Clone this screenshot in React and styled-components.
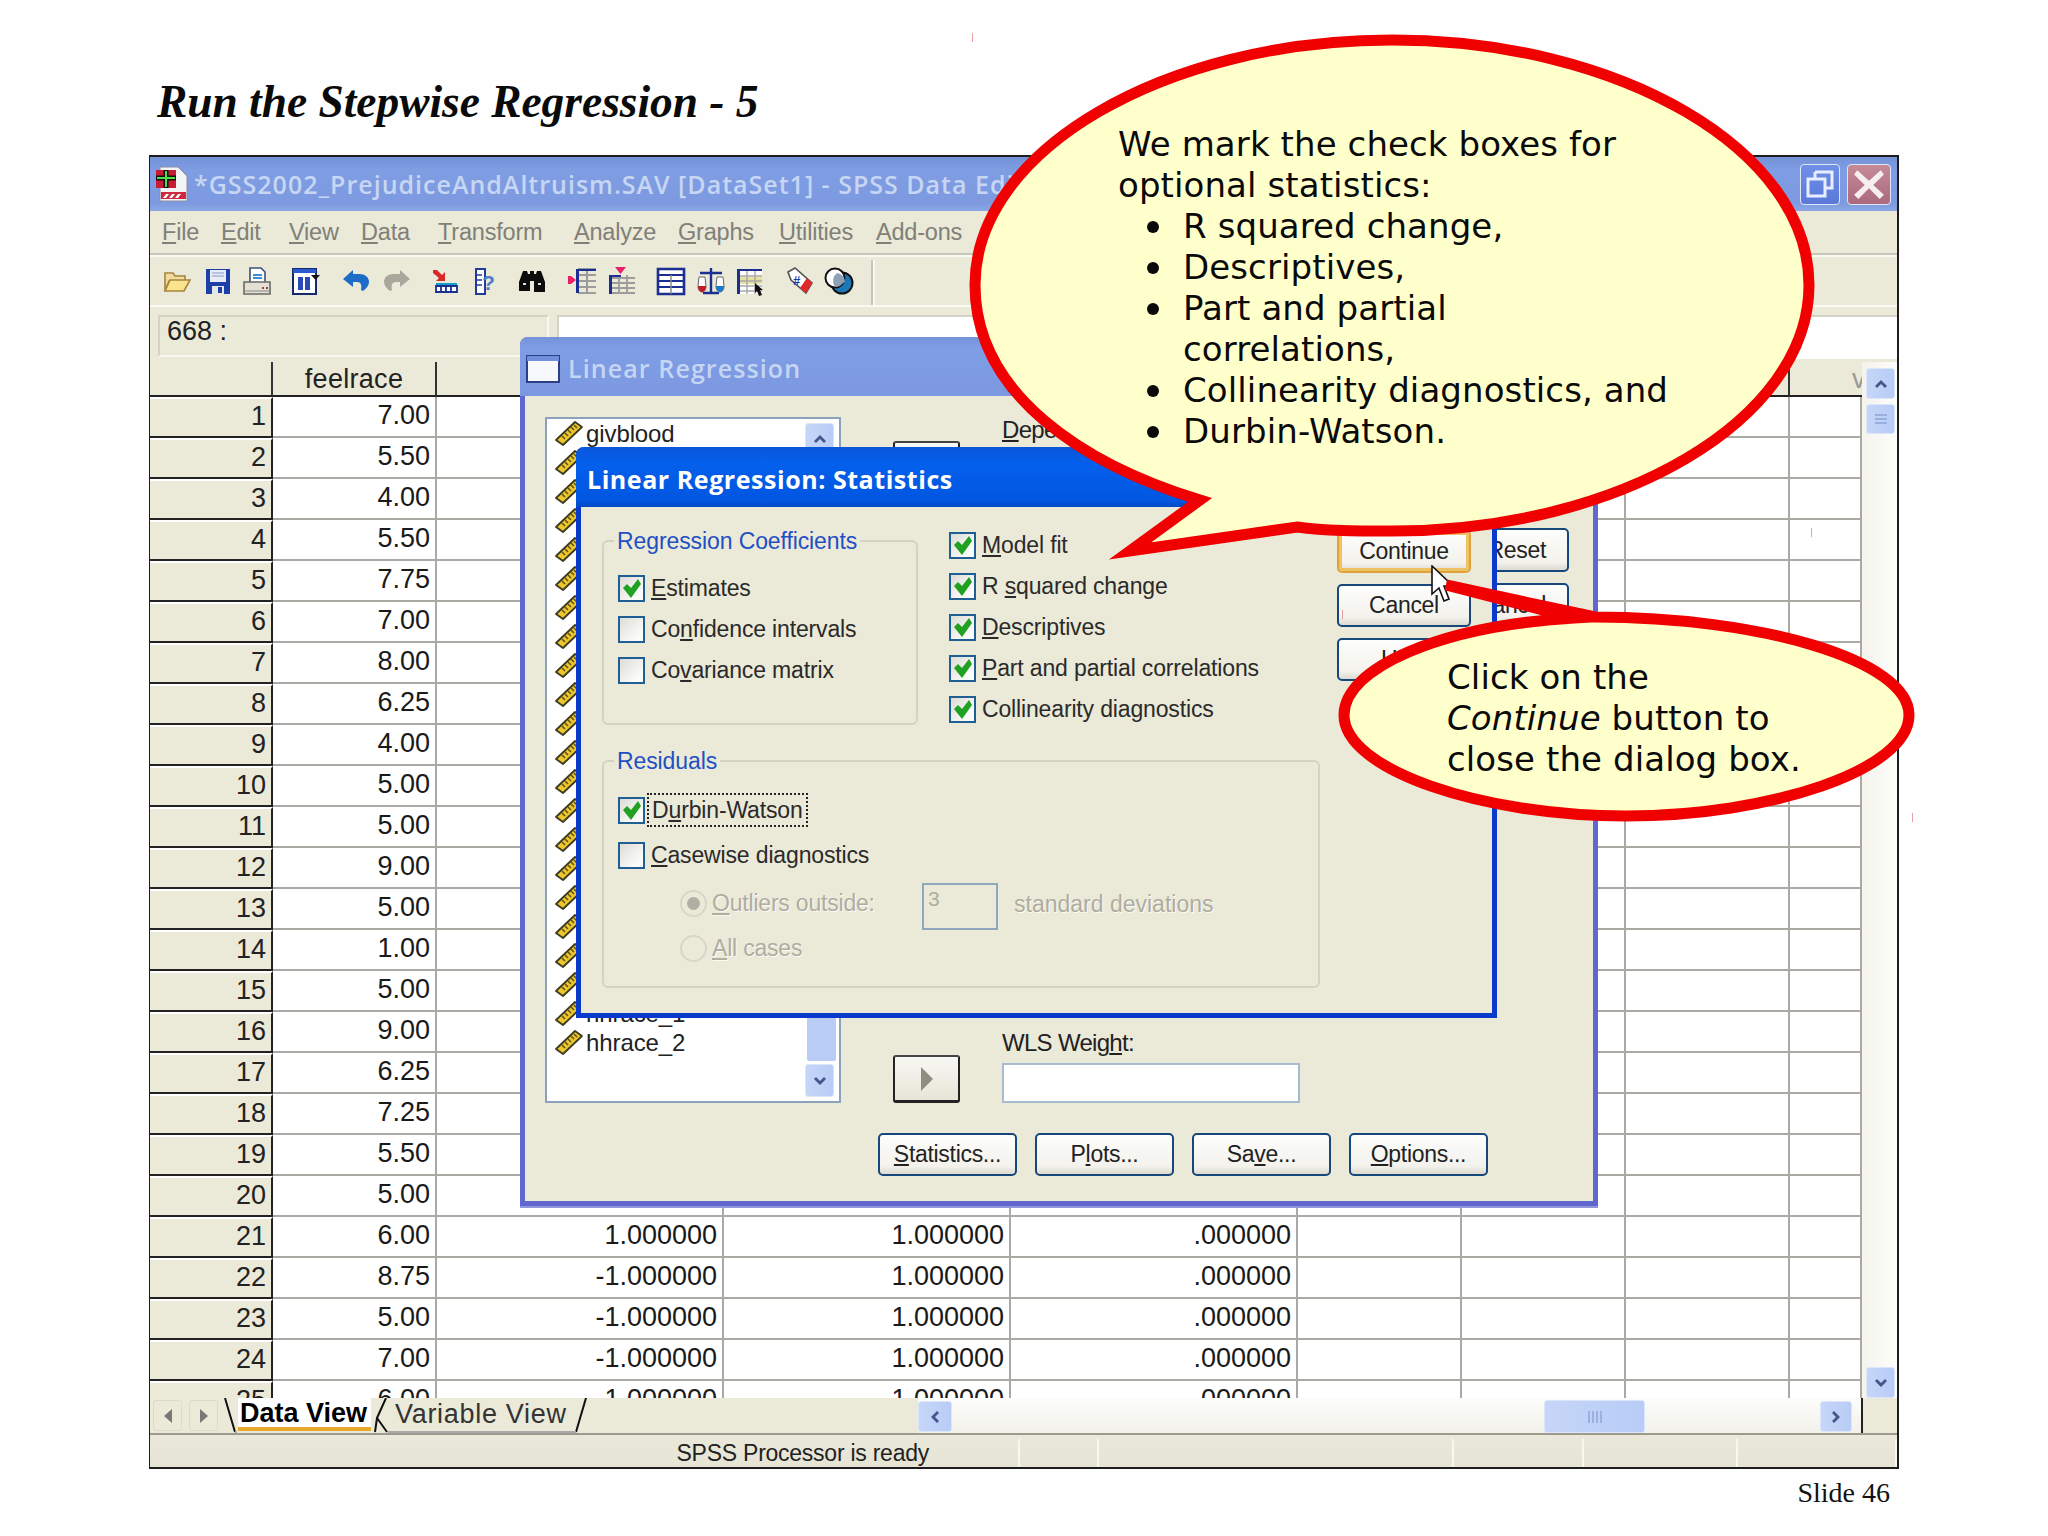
import React from "react";
import styled, { createGlobalStyle } from "styled-components";

const SANS = `"Liberation Sans", Arial, sans-serif`;

const GlobalStyle = createGlobalStyle`
  html, body {
    margin: 0;
    padding: 0;
    background: #fefefe;
  }
  body {
    font-family: ${SANS};
    color: #111;
  }
`;

const Page = styled.div`
  position: relative;
  width: 2048px;
  height: 1536px;
  overflow: hidden;
  padding: 72px 0 0 149px;
  box-sizing: border-box;
  background: #fefefe;
`;

const SlideTitle = styled.h1`
  margin: 0 0 0 8px;
  height: 83px;
  font: italic bold 45.4px/60px "Liberation Serif", "Times New Roman", serif;
  color: #0a0a0a;
`;

const Window = styled.div`
  position: relative;
  width: 1750px;
  height: 1314px;
  box-sizing: border-box;
  border: 2px solid #1d1d1d;
  border-left-width: 1px;
  background: #ebe9d8;
  display: flex;
  flex-direction: column;
  overflow: hidden;
`;

const TitleBar = styled.div`
  height: 54px;
  flex: none;
  display: flex;
  align-items: center;
  padding: 0 6px 0 4px;
  background: linear-gradient(#7492d8, #7f9de3 25%, #7d9ae0 85%, #8aa6e4);
`;

const WindowTitle = styled.span`
  flex: 1;
  margin-left: 4px;
  font: 600 25px "Open Sans", sans-serif;
  letter-spacing: 1px;
  color: #c6d6f3;
  white-space: nowrap;
  overflow: hidden;
`;

const CtrlButton = styled.div`
  width: ${(p) => p.$w}px;
  height: 41px;
  margin-left: 7px;
  border-radius: 4px;
  border: 1px solid #dfe6f6;
  box-sizing: border-box;
  background: ${(p) => p.$bg};
  display: flex;
  align-items: center;
  justify-content: center;
`;

const MenuBar = styled.div`
  height: 44px;
  flex: none;
  display: flex;
  align-items: center;
  padding-left: 12px;
  box-sizing: border-box;
  border-bottom: 2px solid #c8c6b8;
  font-size: 23.5px;
  letter-spacing: -0.2px;
  color: #808078;
`;

const MenuItem = styled.span`
  width: ${(p) => p.$w}px;
  flex: none;
`;

const Toolbar = styled.div`
  height: 50px;
  flex: none;
  position: relative;
  border-top: 2px solid #fafaf4;
  box-sizing: border-box;
  display: flex;
  align-items: center;
  padding-left: 12px;
`;

const ToolIcon = styled.svg`
  width: 30px;
  height: 30px;
  flex: none;
  margin-left: ${(p) => p.$gap}px;
`;

const ToolSeparator = styled.div`
  position: absolute;
  left: 721px;
  top: 3px;
  bottom: 0;
  width: 2px;
  background: #c8c6b8;
  box-shadow: 2px 0 0 #f8f8f0;
`;

const CellBar = styled.div`
  height: 57px;
  flex: none;
  display: flex;
  gap: 8px;
  padding: 8px 0 0 8px;
  box-sizing: border-box;
  border-top: 2px solid #fafaf4;
`;

const CellName = styled.div`
  width: 391px;
  height: 42px;
  box-sizing: border-box;
  border: 2px solid #d4d2c4;
  border-bottom-color: #f8f8f0;
  border-right-color: #f8f8f0;
  padding-left: 7px;
  font-size: 27px;
  line-height: 28px;
  color: #222;
`;

const CellValue = styled.div`
  flex: 1;
  height: 42px;
  background: #fff;
  border-top: 2px solid #d4d2c4;
  border-left: 2px solid #d4d2c4;
`;

const SheetArea = styled.div`
  flex: none;
  height: 1036px;
  display: flex;
  overflow: hidden;
`;

const Grid = styled.div`
  width: 1712px;
  flex: none;
  overflow: hidden;
  background: #fff;
`;

const GridRow = styled.div`
  display: grid;
  grid-template-columns: 123px 164px 287px 287px 287px 164px 164px 164px 72px;
  height: ${(p) => p.$h}px;
`;

const HeadCell = styled.div`
  box-sizing: border-box;
  background: #ebe9d8;
  border-right: 2px solid #333;
  border-bottom: 2px solid #222;
  font-size: 27px;
  line-height: 35px;
  letter-spacing: 0.3px;
  text-align: center;
  overflow: hidden;
  white-space: nowrap;
  color: #222;
  ${(p) => p.$last && `border-right: none; text-align: left; padding-left: 62px; color: #999;`}
`;

const RowLabel = styled.div`
  box-sizing: border-box;
  background: #ebe9d8;
  border-top: 2px solid #fff;
  border-right: 2px solid #222;
  border-bottom: 2px solid #222;
  font-size: 27px;
  line-height: 34px;
  text-align: right;
  padding-right: 5px;
  color: #222;
`;

const DataCell = styled.div`
  box-sizing: border-box;
  border-right: 2px solid #aaa9a4;
  border-bottom: 2px solid #aaa9a4;
  font-size: 27px;
  line-height: 36px;
  text-align: right;
  padding-right: 5px;
  color: #1a1a1a;
`;

const VScroll = styled.div`
  flex: 1;
  position: relative;
  background: linear-gradient(90deg, #f4f3ec, #fdfdfb);
`;

const ScrollBtn = styled.div`
  position: absolute;
  left: ${(p) => p.$left ?? 4}px;
  top: ${(p) => p.$top ?? "auto"};
  bottom: ${(p) => p.$bottom ?? "auto"};
  width: ${(p) => p.$w ?? 29}px;
  height: ${(p) => p.$h ?? 31}px;
  box-sizing: border-box;
  border-radius: 3px;
  border: 1px solid #dbe6fb;
  background: linear-gradient(90deg, #c6d6f8, #b8ccf6);
  display: flex;
  align-items: center;
  justify-content: center;
`;

const BottomBar = styled.div`
  flex: none;
  height: 35px;
  display: flex;
  border-bottom: 2px solid #9c9a8c;
  box-sizing: content-box;
`;

const TabStrip = styled.div`
  width: 765px;
  flex: none;
  position: relative;
  display: flex;
  align-items: center;
  padding-left: 3px;
  gap: 7px;
  background: #ebe9d8;
`;

const NavButton = styled.div`
  width: 29px;
  height: 31px;
  border: 1px solid #dcdacb;
  border-radius: 3px;
  box-sizing: border-box;
  display: flex;
  align-items: center;
  justify-content: center;
`;

const Tab = styled.span`
  position: absolute;
  top: 0;
  left: ${(p) => p.$left}px;
  height: 33px;
  font-size: 27px;
  font-weight: ${(p) => (p.$active ? 700 : 400)};
  line-height: 33px;
  letter-spacing: ${(p) => (p.$active ? "0" : "0.7px")};
  color: ${(p) => (p.$active ? "#000" : "#333")};
  white-space: nowrap;
  ${(p) => p.$active && `
    background: #fff;
    border-bottom: 4px solid #e8a829;
    box-sizing: border-box;
    padding: 0 4px 0 2px;
    line-height: 31px;
  `}
`;

const TabLines = styled.svg`
  position: absolute;
  left: 0;
  top: 0;
  width: 765px;
  height: 35px;
  pointer-events: none;
`;

const HScroll = styled.div`
  flex: 1;
  position: relative;
  background: linear-gradient(#fcfcfa, #f2f1ea);
`;

const Corner = styled.div`
  width: 36px;
  flex: none;
  background: #ebe9d8;
  border-left: 2px solid #222;
  box-sizing: border-box;
`;

const StatusBar = styled.div`
  flex: 1;
  display: grid;
  grid-template-columns: 870px 79px 355px 130px 154px 1fr;
  background: linear-gradient(#e9e8da, #e6e5d4);
`;

const StatusCell = styled.div`
  border-right: 2px solid #f8f8f0;
  margin: 4px 0;
  font-size: 23px;
  line-height: 28px;
  text-align: right;
  padding-right: 89px;
  letter-spacing: -0.25px;
  color: #222;
  &:not(:first-child) {
    padding-right: 0;
  }
`;

const SlideNumber = styled.div`
  position: absolute;
  right: 158px;
  top: 1477px;
  font: 28px/32px "Liberation Serif", "Times New Roman", serif;
  color: #111;
`;

/* Linear Regression dialog, inactive, behind the Statistics one */
const BackDialog = styled.div`
  position: absolute;
  left: 370px;
  top: 180px;
  width: 1078px;
  height: 869px;
  box-sizing: border-box;
  border: 5px solid #6068d0;
  border-top: none;
  border-radius: 8px 8px 0 0;
  background: #ebe9d8;
  box-shadow: 0 2px 0 #8f96dc;
`;

const BackTitle = styled.div`
  margin: 0 -5px;
  height: 59px;
  display: flex;
  align-items: center;
  padding: 2px 0 0 6px;
  box-sizing: border-box;
  border-radius: 8px 8px 0 0;
  background: linear-gradient(#7492d8, #7f9ee6 20%, #7c98e0 90%);
  font: 600 25px "Open Sans", sans-serif;
  letter-spacing: 1.1px;
  color: #c5d6f3;
  gap: 8px;
`;

const VarList = styled.div`
  position: absolute;
  left: 20px;
  top: 80px;
  width: 296px;
  height: 686px;
  box-sizing: border-box;
  border: 2px solid #8aa3ba;
  background: #fff;
  overflow: hidden;
`;

const VarRow = styled.div`
  height: 29px;
  display: flex;
  align-items: center;
  gap: 2px;
  padding-left: 7px;
  font-size: 24px;
  letter-spacing: -0.1px;
  color: #222;
`;

const ListScroll = styled.div`
  position: absolute;
  right: 2px;
  top: 4px;
  bottom: 4px;
  width: 32px;
`;

const ListThumb = styled.div`
  position: absolute;
  left: 2px;
  width: 29px;
  bottom: 36px;
  height: 60px;
  background: #b8ccf6;
  border-radius: 2px;
`;

const ArrowBtn = styled.div`
  position: absolute;
  left: 368px;
  top: ${(p) => p.$top}px;
  width: 67px;
  height: 48px;
  box-sizing: border-box;
  border: 2px solid #222;
  border-top-color: #444;
  border-bottom-width: 3px;
  border-radius: 3px;
  background: linear-gradient(#f8f8f4, #e6e5d8);
  display: flex;
  align-items: center;
  justify-content: center;
`;

const FieldLabel = styled.div`
  position: absolute;
  left: 477px;
  top: ${(p) => p.$top}px;
  font-size: 24px;
  letter-spacing: -0.7px;
  color: #222;
  white-space: nowrap;
`;

const WeightInput = styled.div`
  position: absolute;
  left: 477px;
  top: 726px;
  width: 298px;
  height: 40px;
  box-sizing: border-box;
  background: #fff;
  border: 2px solid #a8bbce;
`;

const PushButton = styled.div`
  box-sizing: border-box;
  height: ${(p) => p.$h ?? 43}px;
  width: ${(p) => p.$w ?? 139}px;
  border: 2px solid ${(p) => (p.$default ? "#1f5b96" : "#17487c")};
  border-radius: 5px;
  background: linear-gradient(#fdfdfc, #f3f2ec 80%, #dcdad0);
  display: flex;
  align-items: center;
  justify-content: ${(p) => p.$justify ?? "center"};
  padding: ${(p) => p.$pad ?? "0"};
  font-size: 23px;
  letter-spacing: -0.3px;
  color: #222;
  white-space: nowrap;
  ${(p) => p.$default && `box-shadow: inset 0 0 0 3px #eec164; border-color: #e0a23a;`}
`;

const BackButtonRow = styled.div`
  position: absolute;
  left: 353px;
  top: 796px;
  display: flex;
  gap: 18px;
`;

const BackButtonColumn = styled.div`
  position: absolute;
  right: 24px;
  top: 191px;
  display: flex;
  flex-direction: column;
  gap: 11px;
`;

/* Statistics dialog, the active one */
const FrontDialog = styled.div`
  position: absolute;
  left: 51px;
  top: 110px;
  width: 921px;
  height: 571px;
  box-sizing: border-box;
  border: 5px solid #0a3acb;
  border-top: none;
  border-radius: 8px 8px 0 0;
  background: #ebe9d8;
`;

const FrontTitle = styled.div`
  margin: 0 -5px;
  height: 60px;
  display: flex;
  align-items: center;
  padding: 3px 0 0 11px;
  box-sizing: border-box;
  border-radius: 8px 8px 0 0;
  background: linear-gradient(#0a55d8, #0460ec 25%, #0156e0 90%, #0448c4);
  font: 700 25px "Open Sans", sans-serif;
  letter-spacing: 0.55px;
  color: #fff;
`;

const Group = styled.fieldset`
  position: absolute;
  left: ${(p) => p.$left}px;
  top: ${(p) => p.$top}px;
  width: ${(p) => p.$w}px;
  height: ${(p) => p.$h}px;
  box-sizing: border-box;
  margin: 0;
  padding: 0;
  border: 2px solid #d4d2c2;
  border-radius: 6px;
`;

const GroupLegend = styled.legend`
  margin-left: 10px;
  padding: 0 3px;
  font-size: 23px;
  line-height: 24px;
  letter-spacing: -0.1px;
  color: #1f50c4;
`;

const CheckList = styled.div`
  position: absolute;
  left: ${(p) => p.$left}px;
  top: ${(p) => p.$top}px;
  display: flex;
  flex-direction: column;
  gap: 14px;
`;

const CheckRow = styled.label`
  display: flex;
  align-items: center;
  gap: 6px;
  height: 27px;
  font-size: 23px;
  letter-spacing: -0.15px;
  color: #2a2a2a;
  white-space: nowrap;
  margin-top: ${(p) => p.$offset ?? 0}px;
`;

const CheckBox = styled.span`
  width: 27px;
  height: 27px;
  flex: none;
  box-sizing: border-box;
  border: 2px solid #1f5f96;
  background: linear-gradient(135deg, #dddcd6, #fbfbf9 80%);
  display: flex;
  align-items: center;
  justify-content: center;
`;

const Focused = styled.span`
  outline: 2px dotted #222;
  outline-offset: 2px;
  padding: 0 1px;
`;

const RadioRow = styled.div`
  position: absolute;
  left: 76px;
  top: ${(p) => p.$top}px;
  display: flex;
  align-items: center;
  gap: 5px;
  font-size: 23px;
  letter-spacing: -0.2px;
  color: #aeada0;
  text-shadow: 1px 1px 0 #fbfbf6;
  white-space: nowrap;
`;

const Radio = styled.span`
  width: 27px;
  height: 27px;
  box-sizing: border-box;
  border-radius: 50%;
  border: 2px solid #d8d6c8;
  display: flex;
  align-items: center;
  justify-content: center;
  &::after {
    content: "";
    display: ${(p) => (p.$on ? "block" : "none")};
    width: 13px;
    height: 13px;
    border-radius: 50%;
    background: #b0afa4;
  }
`;

const DisabledInput = styled.div`
  position: absolute;
  left: 318px;
  top: 110px;
  width: 76px;
  height: 47px;
  box-sizing: border-box;
  border: 2px solid #8fa8bc;
  padding: 2px 4px;
  font-size: 21px;
  color: #aeada0;
`;

const DisabledText = styled.div`
  position: absolute;
  left: 410px;
  top: 118px;
  font-size: 23px;
  letter-spacing: 0;
  color: #aeada0;
  text-shadow: 1px 1px 0 #fbfbf6;
  white-space: nowrap;
`;

const FrontButtons = styled.div`
  position: absolute;
  left: 756px;
  top: 83px;
  display: flex;
  flex-direction: column;
  gap: 11px;
`;

const Balloon = styled.svg`
  position: absolute;
  left: 0;
  top: 0;
  width: 2048px;
  height: 1536px;
  pointer-events: none;
`;

const BalloonText = styled.div`
  position: absolute;
  left: ${(p) => p.$left}px;
  top: ${(p) => p.$top}px;
  width: ${(p) => p.$w}px;
  font: 34px/41px "DejaVu Sans", Verdana, sans-serif;
  letter-spacing: 0.1px;
  color: #0a0a0a;
  p {
    margin: 0;
  }
  ul {
    margin: 0;
    padding: 0 0 0 65px;
    list-style: none;
  }
  li {
    position: relative;
  }
  li::before {
    content: "";
    position: absolute;
    left: -36px;
    top: 15px;
    width: 12px;
    height: 12px;
    border-radius: 50%;
    background: #0a0a0a;
  }
`;

const Cursor = styled.svg`
  position: absolute;
  left: 1431px;
  top: 565px;
  width: 26px;
  height: 40px;
`;

const Speck = styled.div`
  position: absolute;
  left: ${(p) => p.$x}px;
  top: ${(p) => p.$y}px;
  width: 1px;
  height: 9px;
  background: #e8a0a8;
`;

const U = styled.span`
  text-decoration: underline;
  text-underline-offset: 2px;
`;

const labelled = (text) => {
  const parts = text.split("_");
  if (parts.length < 2) return text;
  return (
    <>
      {parts[0]}
      <U>{parts[1][0]}</U>
      {parts[1].slice(1)}
    </>
  );
};

const Tick = () => (
  <svg width="21" height="21" viewBox="0 0 21 21">
    <path d="M2 10l4-4 4 4 7-9 3 5-10 14z" fill="#21a121" />
  </svg>
);

const Check = ({ label, on }) => (
  <CheckRow>
    <CheckBox>{on && <Tick />}</CheckBox>
    <span>{label}</span>
  </CheckRow>
);

const Chevron = ({ dir, color = "#44568a" }) => {
  const d = {
    up: "M2 10l6-6 6 6-2 2-4-4-4 4z",
    down: "M2 6l6 6 6-6-2-2-4 4-4-4z",
    left: "M10 2l-6 6 6 6 2-2-4-4 4-4z",
    right: "M6 2l6 6-6 6-2-2 4-4-4-4z",
  }[dir];
  return (
    <svg width="16" height="16" viewBox="0 0 16 16">
      <path d={d} fill={color} />
    </svg>
  );
};

const RulerIcon = () => (
  <svg width="30" height="27" viewBox="0 0 30 27" style={{ flex: "none" }}>
    <path d="M2 20L21 2l7 5L9 25z" fill="#eec52a" stroke="#3c3a20" strokeWidth="1.8" strokeLinejoin="round" />
    <path d="M8 16l3 3M11 13l3 3M14 10l3 3M17 7l3 3M20 5l3 3" stroke="#5a5520" strokeWidth="1.6" />
  </svg>
);

const GRID_LINE = "#a8a8a8";

const tools = [
  { gap: 0, body: <><path d="M3 7h8l2 3h10v5H7L3 25z" fill="#f0dc9c" stroke="#a8843c" strokeWidth="1.6" /><path d="M3 25l5-11h20l-6 11z" fill="#f8e58e" stroke="#a8843c" strokeWidth="1.6" /></> },
  { gap: 11, body: <><path d="M3 3h24v25H3z" fill="#1d3fa8" /><path d="M7 4h16v12H7z" fill="#e8ecf8" /><path d="M9 7h12M9 10h12" stroke="#a8b4d8" strokeWidth="1.4" /><path d="M9 20h12v8H9z" fill="#e6e6e6" /><path d="M15 21h4v6h-4z" fill="#1d3fa8" /></> },
  { gap: 9, body: <><path d="M8 2h11l4 4v12H8z" fill="#fff" stroke="#39507e" strokeWidth="1.6" /><path d="M11 9h9M11 12h9" stroke="#3c8cd8" strokeWidth="2" /><path d="M2 16h26v12H2z" fill="#e4e0d6" stroke="#6a6a60" strokeWidth="1.6" /><path d="M2 25h26" stroke="#888" strokeWidth="1" /><path d="M20 22h2" stroke="#c03030" strokeWidth="2" /><path d="M24 22h2" stroke="#555" strokeWidth="2" /></> },
  { gap: 19, body: <><path d="M2 3h23v25H2z" fill="#fff" stroke="#17296e" strokeWidth="2" /><path d="M2 3h23v4H2z" fill="#2a5ad0" /><path d="M7 11h5v13H7zM14 11h5v13h-5z" fill="#2a4ab8" /><path d="M20 9h9l-4.5 5z" fill="#111" /></> },
  { gap: 20, body: <path d="M12 4L2 13l10 8v-5h4c4 0 5 3 4 8l2 1c4-3 6-6 6-9 0-5-4-8-10-8h-6z" fill="#1c6cc8" /> },
  { gap: 11, body: <path d="M18 4l10 9-10 8v-5h-4c-4 0-5 3-4 8l-2 1c-4-3-6-6-6-9 0-5 4-8 10-8h6z" fill="#a8a79c" /> },
  { gap: 17, body: <><path d="M4 4l4 0 5 5 3-3 0 9-9 0 3-3-6-5z" fill="#d82828" /><path d="M7 17h21v2H7z" fill="#1a9ac8" /><path d="M7 20h21v6H7z" fill="#fff" stroke="#1a2f90" strokeWidth="1.8" /><path d="M12 20v6M17 20v6M22 20v6" stroke="#1a2f90" strokeWidth="1.8" /></> },
  { gap: 10, body: <><path d="M7 3h9v25H7z" fill="#fff" stroke="#1f3c9a" strokeWidth="2" /><path d="M7 9h6M7 14h6M7 19h6" stroke="#1f3c9a" strokeWidth="1.4" /><text x="13" y="24" fontSize="21" fontWeight="700" fill="#4a80c8" fontFamily="Liberation Sans">?</text></> },
  { gap: 18, body: <><path d="M2 16l4-11h4l1 3h2V5h4v3h2l1-3h4l4 11v10h-11V15h-4v10H2z" fill="#0c0c0c" /><path d="M6 18h3M21 18h3" stroke="#ddd" strokeWidth="2" /></> },
  { gap: 21, body: <><path d="M10 3h18M10 9h18M10 15h18M10 21h18M10 27h18M19 3v24" stroke="#9c9c9c" strokeWidth="2" /><path d="M8 3h3v24H8z" fill="#1a2f90" /><path d="M8 3h20v2H8z" fill="#1a2f90" /><path d="M0 10h3l5 4-5 4H0z" fill="#e8206a" /></> },
  { gap: 9, body: <><path d="M2 12h26M2 17h26M2 22h26M2 27h26M12 9v19M20 9v19" stroke="#9c9c9c" strokeWidth="1.8" /><path d="M2 9h3v19H2z" fill="#1a2f90" /><path d="M2 9h12v2H2z" fill="#1a2f90" /><path d="M8 1h11l-5.5 7z" fill="#e8206a" /></> },
  { gap: 19, body: <><path d="M2 3h26v25H2z" fill="#fff" stroke="#1a2f90" strokeWidth="2.6" /><path d="M2 9h26M2 15h26M2 21h26" stroke="#1a2f90" strokeWidth="2" /><path d="M15 9v19" stroke="#888" strokeWidth="1.4" /></> },
  { gap: 10, body: <><path d="M15 2v25M7 27h16M4 7h22" stroke="#1a2f90" strokeWidth="2.4" /><path d="M2 20c0 4 2 6 4 6s4-2 4-6l-1-9H3z" fill="#fff" stroke="#666" strokeWidth="1" /><path d="M2 20c0 4 2 6 4 6s4-2 4-6z" fill="#c01c2c" /><path d="M20 20c0 4 2 6 4 6s4-2 4-6l-1-9h-6z" fill="#fff" stroke="#666" strokeWidth="1" /><path d="M20 20c0 4 2 6 4 6s4-2 4-6z" fill="#1c78c8" /></> },
  { gap: 9, body: <><path d="M2 3h25v25H2z" fill="#fff" /><path d="M5 11h22v7H5z" fill="#e8e2a0" /><path d="M5 10h22M5 15h22M5 20h22M5 25h22M12 4v24M20 4v24" stroke="#a8a8a8" strokeWidth="1.4" /><path d="M2 3h3v25H2zM2 3h25v2H2z" fill="#1a2f90" /><path d="M20 17l8 7h-3l2 5-3 1-2-5-2 2z" fill="#111" /></> },
  { gap: 20, body: <><path d="M3 6l7-4 17 15-6 10L6 14z" fill="#fff" stroke="#555" strokeWidth="1.6" /><path d="M15 22l7-10 5 5-6 10z" fill="#e02828" /><text x="8" y="19" fontSize="13" fontWeight="700" fill="#1a3aa8" fontFamily="Liberation Sans">#</text></> },
  { gap: 9, body: <><circle cx="18" cy="17" r="10.5" fill="#1c78b8" stroke="#111" strokeWidth="2" /><circle cx="11" cy="12" r="9.5" fill="#fff" stroke="#111" strokeWidth="2" /><path d="M13 7a9 9 0 018 9 9 9 0 01-2 1 9.5 9.5 0 01-8 4 10 10 0 012-14z" fill="#8ca0b8" /></> },
];

const menus = [
  ["File", 59],
  ["Edit", 68],
  ["View", 72],
  ["Data", 77],
  ["Transform", 136],
  ["Analyze", 104],
  ["Graphs", 101],
  ["Utilities", 97],
  ["Add-ons", 140],
  ["Window", 100],
  ["Help", 60],
];
const firstCol = ["7.00", "5.50", "4.00", "5.50", "7.75", "7.00", "8.00", "6.25", "4.00", "5.00", "5.00", "9.00", "5.00", "1.00", "5.00", "9.00", "6.25", "7.25", "5.50", "5.00", "6.00", "8.75", "5.00", "7.00", "6.00"];
const extras = { 21: "1.000000", 22: "-1.000000", 23: "-1.000000", 24: "-1.000000", 25: "-1.000000" };

const varRows = Array.from({ length: 22 }, (_, i) => i);

export default function App() {
  return (
    <Page>
      <GlobalStyle />
      <SlideTitle>Run the Stepwise Regression - 5</SlideTitle>
      <Window>
        <TitleBar>
          <svg width="36" height="38" viewBox="0 0 36 38" style={{ flex: "none" }}>
            <path d="M6 2h18l9 9v25H6z" fill="#f4f4f4" stroke="#8c8ca0" />
            <path d="M2 5h20v18H2z" fill="#c81c34" />
            <path d="M2 13h20M12 5v18" stroke="#111" strokeWidth="5" />
            <path d="M3 13h18M12 6v16" stroke="#4ce04c" strokeWidth="2" />
            <path d="M7 27h25v7H7z" fill="#d02840" />
            <path d="M9 33l3-4h3l-3 4zM15 33l3-4h3l-3 4zM21 33l3-4h3l-3 4z" fill="#fff" />
          </svg>
          <WindowTitle>*GSS2002_PrejudiceAndAltruism.SAV [DataSet1] - SPSS Data Editor</WindowTitle>
          <CtrlButton $w={40} $bg="linear-gradient(#7090e8,#5a78d8)">
            <svg width="30" height="30" viewBox="0 0 30 30">
              <path d="M10 3h17v16h-6M10 3v6" fill="none" stroke="#e8eefc" strokeWidth="3" />
              <path d="M3 10h17v17H3z" fill="none" stroke="#e8eefc" strokeWidth="3" />
            </svg>
          </CtrlButton>
          <CtrlButton $w={44} $bg="linear-gradient(#c58a98,#ab6a7e)">
            <svg width="32" height="32" viewBox="0 0 30 30">
              <path d="M4 2l11 10L26 2l3 4-10 10 10 9-4 4-10-10L5 29l-4-4 10-9L1 6z" fill="#f6eef0" />
            </svg>
          </CtrlButton>
        </TitleBar>
        <MenuBar>
          {menus.map(([m, w]) => (
            <MenuItem key={m} $w={w}>
              <U>{m[0]}</U>
              {m.slice(1)}
            </MenuItem>
          ))}
        </MenuBar>
        <Toolbar>
          {tools.map((t, i) => (
            <ToolIcon key={i} $gap={t.gap} viewBox="0 0 30 30">
              {t.body}
            </ToolIcon>
          ))}
          <ToolSeparator />
        </Toolbar>
        <CellBar>
          <CellName>668 :</CellName>
          <CellValue />
        </CellBar>
        <SheetArea>
          <Grid>
            <GridRow $h={35}>
              <HeadCell />
              <HeadCell>feelrace</HeadCell>
              <HeadCell />
              <HeadCell />
              <HeadCell />
              <HeadCell />
              <HeadCell />
              <HeadCell />
              <HeadCell $last>var</HeadCell>
            </GridRow>
            {firstCol.map((v, i) => {
              const n = i + 1;
              const low = extras[n];
              return (
                <GridRow key={n} $h={41}>
                  <RowLabel>{n}</RowLabel>
                  <DataCell>{v}</DataCell>
                  <DataCell>{low}</DataCell>
                  <DataCell>{low && "1.000000"}</DataCell>
                  <DataCell>{low && ".000000"}</DataCell>
                  <DataCell />
                  <DataCell />
                  <DataCell />
                  <DataCell />
                </GridRow>
              );
            })}
          </Grid>
          <VScroll>
            <ScrollBtn $top="6px">
              <Chevron dir="up" />
            </ScrollBtn>
            <ScrollBtn $top="42px" $h={30}>
              <svg width="14" height="12" viewBox="0 0 14 12">
                <path d="M1 2h12M1 6h12M1 10h12" stroke="#8ca4d8" strokeWidth="1.5" />
              </svg>
            </ScrollBtn>
            <ScrollBtn $bottom="0">
              <Chevron dir="down" />
            </ScrollBtn>
          </VScroll>
        </SheetArea>
        <BottomBar>
          <TabStrip>
            <NavButton>
              <svg width="12" height="18" viewBox="0 0 12 18"><path d="M10 2v14L2 9z" fill="#777" /></svg>
            </NavButton>
            <NavButton>
              <svg width="12" height="18" viewBox="0 0 12 18"><path d="M2 2v14l8-7z" fill="#777" /></svg>
            </NavButton>
            <Tab $active $left={88}>Data View</Tab>
            <Tab $left={245}>Variable View</Tab>
            <TabLines viewBox="0 0 765 35">
              <path d="M75 0l10 34" stroke="#111" strokeWidth="2" fill="none" />
              <path d="M236 0l-9 20 10 14M227 20l-2 14" stroke="#111" strokeWidth="2" fill="none" />
              <path d="M436 0l-10 34" stroke="#111" strokeWidth="2" fill="none" />
              <path d="M85 34h2M238 34h188" stroke={GRID_LINE} strokeWidth="2" fill="none" />
            </TabLines>
          </TabStrip>
          <HScroll>
            <ScrollBtn $top="3px" $left={0} $w={34}>
              <Chevron dir="left" />
            </ScrollBtn>
            <ScrollBtn $top="2px" $left={626} $w={101} $h={33}>
              <svg width="16" height="14" viewBox="0 0 16 14">
                <path d="M2 1v12M6 1v12M10 1v12M14 1v12" stroke="#8ca4d8" strokeWidth="1.4" />
              </svg>
            </ScrollBtn>
            <ScrollBtn $top="3px" $left={902} $w={32}>
              <Chevron dir="right" />
            </ScrollBtn>
          </HScroll>
          <Corner />
        </BottomBar>
        <StatusBar>
          <StatusCell>SPSS Processor is ready</StatusCell>
          <StatusCell />
          <StatusCell />
          <StatusCell />
          <StatusCell />
          <StatusCell />
        </StatusBar>

        <BackDialog>
          <BackTitle>
            <svg width="34" height="30" viewBox="0 0 34 30">
              <path d="M1 3h32v26H1z" fill="#f6f8fe" stroke="#2c3e88" strokeWidth="2" />
              <path d="M1 3h32v5H1z" fill="#6f8fdc" />
            </svg>
            Linear Regression
          </BackTitle>
          <VarList>
            {varRows.map((i) => (
              <VarRow key={i}>
                <RulerIcon />
                {i === 0 ? "givblood" : i === 20 ? "hhrace_1" : i === 21 ? "hhrace_2" : ""}
              </VarRow>
            ))}
            <ListScroll>
              <ScrollBtn $top="0" $left={0}>
                <Chevron dir="up" />
              </ScrollBtn>
              <ListThumb />
              <ScrollBtn $bottom="0" $left={0} $h={33}>
                <Chevron dir="down" />
              </ScrollBtn>
            </ListScroll>
          </VarList>
          <ArrowBtn $top={104} />
          <ArrowBtn $top={718}>
            <svg width="16" height="26" viewBox="0 0 16 26"><path d="M2 1l12 12L2 25z" fill="#8e8d80" /></svg>
          </ArrowBtn>
          <FieldLabel $top={79}>
            <U>D</U>ependent:
          </FieldLabel>
          <FieldLabel $top={692}>
            WLS Weig<U>h</U>t:
          </FieldLabel>
          <WeightInput />
          <BackButtonRow>
            <PushButton>{labelled("_Statistics...")}</PushButton>
            <PushButton>{labelled("P_lots...")}</PushButton>
            <PushButton>{labelled("Sa_ve...")}</PushButton>
            <PushButton>{labelled("_Options...")}</PushButton>
          </BackButtonRow>
          <BackButtonColumn>
            <PushButton $justify="flex-end" $pad="0 21px 0 0" $h={44}>Reset</PushButton>
            <PushButton $justify="flex-end" $pad="0 21px 0 0" $h={44}>Cancel</PushButton>
          </BackButtonColumn>

          <FrontDialog>
            <FrontTitle>Linear Regression: Statistics</FrontTitle>
            <Group $left={21} $top={82} $w={316} $h={196}>
              <GroupLegend>Regression Coefficients</GroupLegend>
            </Group>
            <CheckList $left={37} $top={128}>
              <Check on label={labelled("_Estimates")} />
              <Check label={labelled("Co_nfidence intervals")} />
              <Check label={labelled("Co_variance matrix")} />
            </CheckList>
            <CheckList $left={368} $top={85}>
              <Check on label={labelled("_Model fit")} />
              <Check on label={labelled("R _squared change")} />
              <Check on label={labelled("_Descriptives")} />
              <Check on label={labelled("_Part and partial correlations")} />
              <Check on label="Collinearity diagnostics" />
            </CheckList>
            <Group $left={21} $top={302} $w={718} $h={239}>
              <GroupLegend>Residuals</GroupLegend>
              <DisabledInput>3</DisabledInput>
              <DisabledText>standard deviations</DisabledText>
              <RadioRow $top={117}>
                <Radio $on />
                <span>{labelled("_Outliers outside:")}</span>
              </RadioRow>
              <RadioRow $top={162}>
                <Radio />
                <span>{labelled("_All cases")}</span>
              </RadioRow>
            </Group>
            <CheckList $left={37} $top={350}>
              <Check on label={<Focused>{labelled("D_urbin-Watson")}</Focused>} />
              <CheckRow $offset={4}>
                <CheckBox />
                <span>{labelled("_Casewise diagnostics")}</span>
              </CheckRow>
            </CheckList>
            <FrontButtons>
              <PushButton $default $w={134}>Continue</PushButton>
              <PushButton $w={134}>Cancel</PushButton>
              <PushButton $w={134}>Help</PushButton>
            </FrontButtons>
          </FrontDialog>
        </BackDialog>
      </Window>

      <Cursor viewBox="0 0 26 40">
        <path d="M1 1v28l7-6 5 13 5-2-5-13h9z" fill="#fff" stroke="#111" strokeWidth="1.6" />
      </Cursor>

      <Balloon viewBox="0 0 2048 1536">
        <path
          d="M1200 500C1085 465 975 395 975 285C975 150 1165 40 1392 40C1620 40 1809 150 1809 285C1809 420 1620 531 1392 531C1356 531 1326 531 1297 527L1130 551Z"
          fill="#ffffcc"
          stroke="#f00000"
          strokeWidth="11"
          strokeLinejoin="miter"
          strokeMiterlimit="8"
        />
        <path
          d="M1595 617C1760 617 1909 660 1909 715C1909 770 1770 816 1626 816C1482 816 1344 770 1344 715C1344 668 1440 626 1574 618L1446 585Z"
          fill="#ffffcc"
          stroke="#f00000"
          strokeWidth="11"
          strokeLinejoin="miter"
          strokeMiterlimit="8"
        />
      </Balloon>
      <BalloonText $left={1118} $top={124} $w={560}>
        <p>We mark the check boxes for</p>
        <p>optional statistics:</p>
        <ul>
          <li>R squared change,</li>
          <li>Descriptives,</li>
          <li>Part and partial<br />correlations,</li>
          <li>Collinearity diagnostics, and</li>
          <li>Durbin-Watson.</li>
        </ul>
      </BalloonText>
      <BalloonText $left={1447} $top={657} $w={420}>
        <p>Click on the</p>
        <p><i>Continue</i> button to</p>
        <p>close the dialog box.</p>
      </BalloonText>

      <Speck $x={972} $y={33} />
      <Speck $x={1811} $y={528} />
      <Speck $x={1912} $y={813} />
      <Speck $x={1342} $y={610} />
      <SlideNumber>Slide 46</SlideNumber>
    </Page>
  );
}
